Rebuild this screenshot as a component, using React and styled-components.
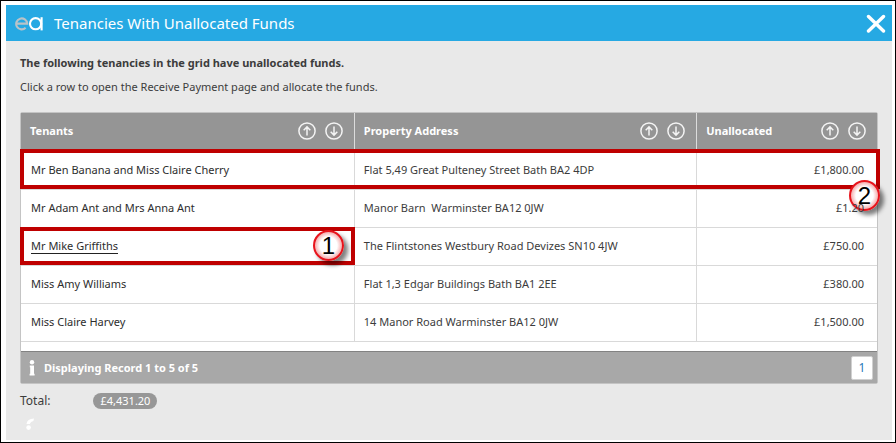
import React from 'react';
import styled, { createGlobalStyle } from 'styled-components';

const GlobalStyle = createGlobalStyle`
  * {
    box-sizing: border-box;
  }

  body {
    margin: 0;
    font-family: 'Noto Sans', 'Open Sans', sans-serif;
    font-size: 11px;
    line-height: 16px;
    color: #3c3c3c;
  }
`;

const Page = styled.div`
  display: flex;
  min-height: 100vh;
  padding: 4px 3px 2px 5px;
  border: 1px solid #000;
  background: #fff;
`;

const Dialog = styled.section`
  flex: 1;
  background: #e9e9e9;
`;

const TitleBar = styled.header`
  display: flex;
  align-items: center;
  gap: 11px;
  height: 36px;
  padding: 0 6px 0 9px;
  background: #26a9e3;
`;

const Title = styled.h1`
  flex: 1;
  margin: 0;
  font-size: 15px;
  font-weight: 400;
  line-height: 24px;
  color: #fff;
`;

const IconButton = styled.button`
  display: flex;
  padding: 0;
  border: 0;
  background: none;
  color: #fff;
  cursor: pointer;
`;

const Content = styled.div`
  padding: 14px 14px 0;
`;

const Lead = styled.p`
  margin: 0 0 8px;
  font-weight: ${(props) => (props.$strong ? 700 : 400)};
`;

const Grid = styled.div`
  margin-top: 17px;
  border: 1px solid #c4c4c4;
  border-radius: 2px;
  background: #fff;
`;

const Table = styled.table`
  width: 100%;
  margin-bottom: 9px;
  border-collapse: separate;
  border-spacing: 0;
  table-layout: fixed;
`;

const HeadCell = styled.th`
  width: ${(props) => props.$width};
  height: 39px;
  padding: 0 11px 3px 9px;
  border-right: 1px solid #dcdcdc;
  background: #959595;
  color: #fff;
  text-align: left;

  &:last-child {
    border-right: 0;
  }
`;

const HeadInner = styled.div`
  display: flex;
  align-items: center;
  gap: 9px;
`;

const HeadLabel = styled.span`
  flex: 1;
`;

const Row = styled.tr`
  position: relative;
`;

const Cell = styled.td`
  position: ${(props) => (props.$marked ? 'relative' : 'static')};
  height: 38px;
  padding: 0 13px 2px ${(props) => (props.$first ? '10px' : '9px')};
  border-right: 1px solid #d9d9d9;
  border-bottom: 1px solid #d9d9d9;
  text-align: ${(props) => (props.$right ? 'right' : 'left')};
  white-space: pre;

  &:last-child {
    border-right: 0;
  }
`;

const TenantLink = styled.a`
  color: #2d2d2d;
  text-decoration: none;
  border-bottom: 1px solid ${(props) => (props.$active ? '#222' : 'transparent')};
`;

const Outline = styled.span`
  position: absolute;
  inset: ${(props) => (props.$wide ? '-3px -3px 1px -1px' : '-1px -1px 0 -1px')};
  border: 4px solid #bf0000;
  pointer-events: none;
`;

const Badge = styled.span`
  position: absolute;
  right: ${(props) => (props.$corner ? '-3px' : '10px')};
  bottom: ${(props) => (props.$corner ? '-21px' : '4px')};
  display: flex;
  align-items: center;
  justify-content: center;
  width: 31px;
  height: 31px;
  border: 2px solid #e8141c;
  border-radius: 50%;
  background: radial-gradient(circle, #fff 45%, #f3a0a0 75%);
  box-shadow: 4px 4px 4px rgba(0, 0, 0, 0.5);
  font-family: 'Liberation Sans', Arial, sans-serif;
  font-size: 24px;
  line-height: 24px;
  color: #000;
`;

const Pager = styled.div`
  display: flex;
  align-items: center;
  gap: 9px;
  height: 32px;
  padding: 0 4px 0 8px;
  border-top: 1px solid #828282;
  background: #a8a8a8;
  color: #fff;
  font-weight: 700;
`;

const PagerText = styled.span`
  flex: 1;
`;

const PageButton = styled.button`
  width: 22px;
  height: 24px;
  padding: 0;
  border: 1px solid #d0d0d0;
  border-radius: 2px;
  background: #fff;
  font-family: inherit;
  font-size: 12px;
  color: #2a7ab8;
`;

const Totals = styled.div`
  display: flex;
  align-items: center;
  gap: 43px;
  margin-top: 9px;
`;

const TotalLabel = styled.span`
  font-size: 12px;
`;

const TotalValue = styled.span`
  padding: 0 7px;
  border-radius: 8px;
  background: #979797;
  color: #fff;
`;

const Spinner = styled.svg`
  display: block;
  margin: 8px 0 0 5px;
`;

const columns = [
  { label: 'Tenants', width: '39%' },
  { label: 'Property Address', width: '40%' },
  { label: 'Unallocated', width: '21%' },
];

const rows = [
  { tenant: 'Mr Ben Banana and Miss Claire Cherry', address: 'Flat 5,49 Great Pulteney Street Bath BA2 4DP', amount: '£1,800.00', rowMark: 2 },
  { tenant: 'Mr Adam Ant and Mrs Anna Ant', address: 'Manor Barn  Warminster BA12 0JW', amount: '£1.20' },
  { tenant: 'Mr Mike Griffiths', address: 'The Flintstones Westbury Road Devizes SN10 4JW', amount: '£750.00', cellMark: 1 },
  { tenant: 'Miss Amy Williams', address: 'Flat 1,3 Edgar Buildings Bath BA1 2EE', amount: '£380.00' },
  { tenant: 'Miss Claire Harvey', address: '14 Manor Road Warminster BA12 0JW', amount: '£1,500.00' },
];

function Logo() {
  return (
    <svg width="28" height="15" viewBox="0 0 28 15" fill="none" strokeWidth="2.1" role="img" aria-label="ea">
      <path d="M1.6 7.6H12.2A5.5 5.5 0 1 0 10.6 11.8" stroke="#b9c3c8" />
      <circle cx="20.6" cy="7.7" r="5.6" stroke="#fff" />
      <path d="M26.6 1.2V14.4" stroke="#fff" />
    </svg>
  );
}

function SortButton({ down, label }) {
  return (
    <IconButton type="button" aria-label={label}>
      <svg width="18" height="18" viewBox="0 0 18 18" fill="none" stroke="#f4f4f4" strokeWidth="1.5">
        <circle cx="9" cy="9" r="8.1" />
        <path d={down ? 'M9 4.5V13M5.7 9.8L9 13.1L12.3 9.8' : 'M9 13.5V5M5.7 8.2L9 4.9L12.3 8.2'} />
      </svg>
    </IconButton>
  );
}

function App() {
  return (
    <Page>
      <GlobalStyle />
      <Dialog>
        <TitleBar>
          <Logo />
          <Title>Tenancies With Unallocated Funds</Title>
          <IconButton type="button" aria-label="Close">
            <svg width="20" height="20" viewBox="0 0 20 20" stroke="#fff" strokeWidth="3.4" strokeLinecap="round">
              <path d="M2.5 3.5L17.5 18M17.5 3.5L2.5 18" />
            </svg>
          </IconButton>
        </TitleBar>
        <Content>
          <Lead $strong>The following tenancies in the grid have unallocated funds.</Lead>
          <Lead>Click a row to open the Receive Payment page and allocate the funds.</Lead>
          <Grid>
            <Table>
              <thead>
                <tr>
                  {columns.map((column) => (
                    <HeadCell key={column.label} $width={column.width}>
                      <HeadInner>
                        <HeadLabel>{column.label}</HeadLabel>
                        <SortButton label={`Sort ${column.label} ascending`} />
                        <SortButton down label={`Sort ${column.label} descending`} />
                      </HeadInner>
                    </HeadCell>
                  ))}
                </tr>
              </thead>
              <tbody>
                {rows.map((row) => (
                  <Row key={row.tenant}>
                    <Cell $first $marked={row.cellMark}>
                      <TenantLink href="#" $active={row.cellMark}>{row.tenant}</TenantLink>
                      {row.cellMark && <Outline />}
                      {row.cellMark && <Badge>{row.cellMark}</Badge>}
                    </Cell>
                    <Cell>{row.address}</Cell>
                    <Cell $right>
                      {row.amount}
                      {row.rowMark && <Outline $wide />}
                      {row.rowMark && <Badge $corner>{row.rowMark}</Badge>}
                    </Cell>
                  </Row>
                ))}
              </tbody>
            </Table>
            <Pager>
              <svg width="6" height="16" viewBox="0 0 6 16" fill="#fff" aria-hidden="true">
                <circle cx="3" cy="2.2" r="2.2" />
                <path d="M0.8 5.4H5V13.8H5.6V15.6H0.6V13.8H1.2V7.2H0.8Z" />
              </svg>
              <PagerText>Displaying Record 1 to 5 of 5</PagerText>
              <PageButton type="button">1</PageButton>
            </Pager>
          </Grid>
          <Totals>
            <TotalLabel>Total:</TotalLabel>
            <TotalValue>£4,431.20</TotalValue>
          </Totals>
          <Spinner width="12" height="14" viewBox="0 0 12 14" aria-hidden="true">
            <path d="M1.5 7Q2 2 9 1.6L8.4 4Q5.5 4.4 4.8 7Z" fill="#fff" />
            <circle cx="3.6" cy="10.6" r="2.3" fill="#fff" />
          </Spinner>
        </Content>
      </Dialog>
    </Page>
  );
}

export default App;
